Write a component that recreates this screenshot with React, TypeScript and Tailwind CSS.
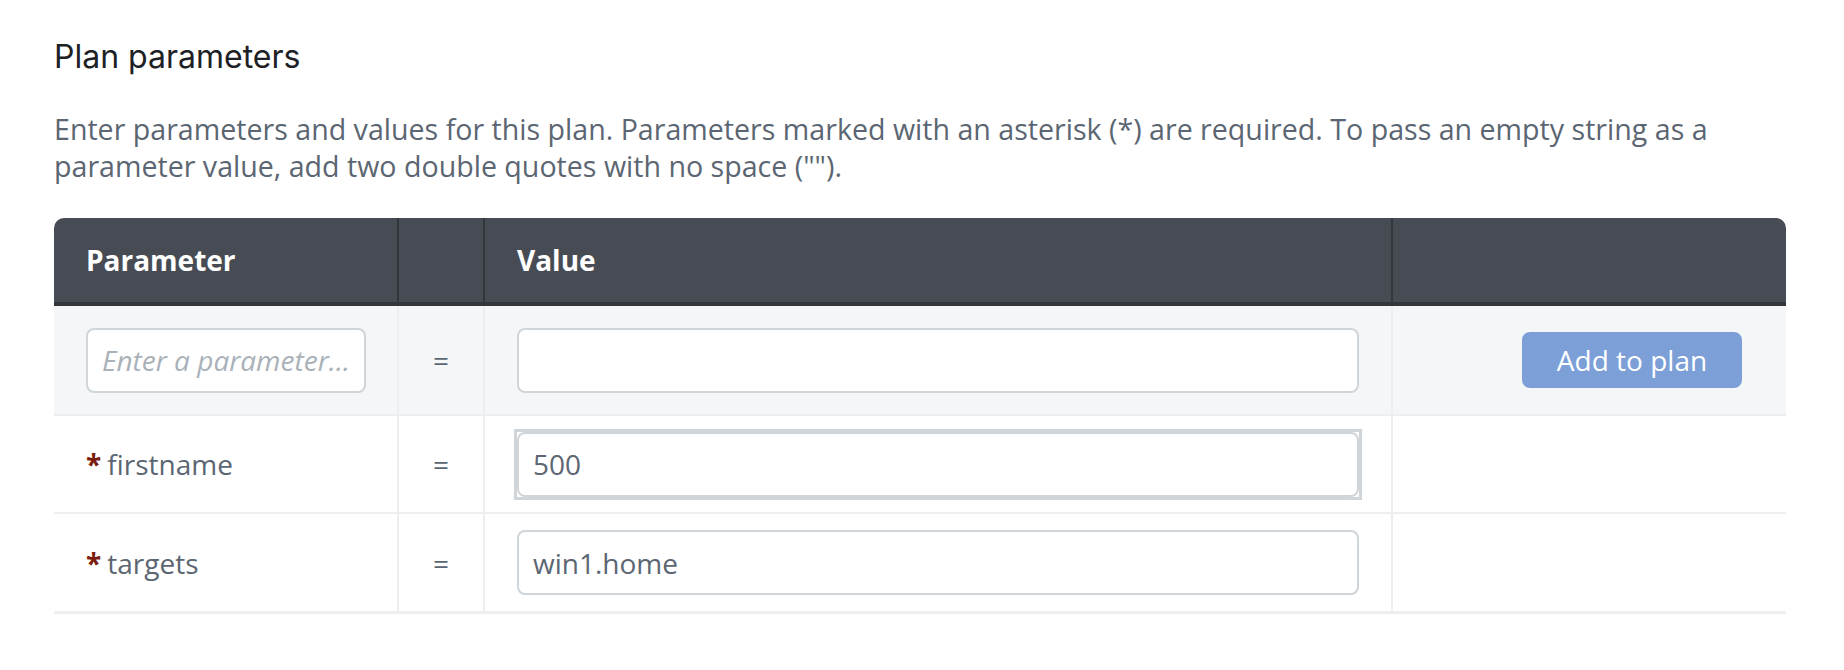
import React, { useState } from 'react';

// Parâmetros do plano (linhas obrigatórias)
const parametros = [
  { nome: 'firstname', valor: '500', focado: true },
  { nome: 'targets', valor: 'win1.home', focado: false },
];

const fonte = "font-['Open_Sans',sans-serif]";

function App() {
  const [novoNome, setNovoNome] = useState('');
  const [novoValor, setNovoValor] = useState('');

  return (
    <div className={`min-h-screen bg-white pl-[54px] pr-[58px] pt-[37px] ${fonte}`}>
      {/* Título */}
      <h2 className="font-['Inter',sans-serif] text-[32px] leading-[40px] text-[#1d2125]">
        Plan parameters
      </h2>
      <p className="mt-[33px] text-[28.6px] leading-[37px] text-[#5b6672]">
        Enter parameters and values for this plan. Parameters marked with an asterisk (*) are required. To pass an empty string as a parameter value, add two double quotes with no space ("").
      </p>

      {/* Tabela */}
      <div className="mt-[34px] w-[1732px]">
        {/* Cabeçalho */}
        <div className="flex h-[88px] rounded-t-[10px] border-b-4 border-[#33373c] bg-[#474c54] text-[28px] font-bold text-white">
          <div className="flex w-[345px] items-center border-r-2 border-[#33373c] px-8">Parameter</div>
          <div className="w-[86px] border-r-2 border-[#33373c]" />
          <div className="flex w-[908px] items-center border-r-2 border-[#33373c] px-8">Value</div>
          <div className="flex-1" />
        </div>

        {/* Linha para adicionar parâmetro */}
        <div className="flex h-[110px] border-b-2 border-[#eceef0] bg-[#f5f6f8]">
          <div className="flex w-[345px] items-center border-r-2 border-[#eceef0] px-8">
            <input
              value={novoNome}
              onChange={(e) => setNovoNome(e.target.value)}
              placeholder="Enter a parameter name"
              className="h-[65px] w-[280px] text-ellipsis rounded-[8px] border-2 border-[#cfd5d8] bg-white px-[14px] text-[28px] text-[#5b6672] outline-none placeholder:italic placeholder:text-[#a9b1b9]"
            />
          </div>
          <div className="flex w-[86px] items-center justify-center border-r-2 border-[#eceef0] text-[28px] text-[#5b6672]">=</div>
          <div className="flex w-[908px] items-center border-r-2 border-[#eceef0] px-8">
            <input
              value={novoValor}
              onChange={(e) => setNovoValor(e.target.value)}
              className="h-[65px] w-full rounded-[8px] border-2 border-[#cfd5d8] bg-white px-[14px] text-[28px] text-[#5b6672] outline-none"
            />
          </div>
          <div className="flex flex-1 items-center justify-end pr-[44px]">
            <button className="h-[56px] w-[220px] rounded-[8px] bg-[#7b9fd6] text-[28px] text-white">
              Add to plan
            </button>
          </div>
        </div>

        {/* Parâmetros existentes */}
        {parametros.map((p, i) => (
          <div
            key={p.nome}
            className={`flex border-[#eceef0] ${i === parametros.length - 1 ? 'h-[100px] border-b-[3px]' : 'h-[98px] border-b-2'}`}
          >
            <div className="flex w-[345px] items-center border-r-2 border-[#eceef0] px-8 text-[28px] text-[#5b6672]">
              <span className="mr-[6px] font-bold text-[#7b1d0e]">*</span>
              {p.nome}
            </div>
            <div className="flex w-[86px] items-center justify-center border-r-2 border-[#eceef0] text-[28px] text-[#5b6672]">=</div>
            <div className="flex w-[908px] items-center border-r-2 border-[#eceef0] px-8">
              {p.focado ? (
                <div className="-mx-[3px] w-[calc(100%+6px)] border-[3px] border-[#cfd5d8]">
                  <input
                    defaultValue={p.valor}
                    className="h-[65px] w-full rounded-[8px] border-2 border-[#cfd5d8] bg-white px-[14px] text-[28px] text-[#5b6672] outline-none"
                  />
                </div>
              ) : (
                <input
                  defaultValue={p.valor}
                  className="h-[65px] w-full rounded-[8px] border-2 border-[#cfd5d8] bg-white px-[14px] text-[28px] text-[#5b6672] outline-none"
                />
              )}
            </div>
            <div className="flex-1" />
          </div>
        ))}
      </div>
    </div>
  );
}

export default App;
